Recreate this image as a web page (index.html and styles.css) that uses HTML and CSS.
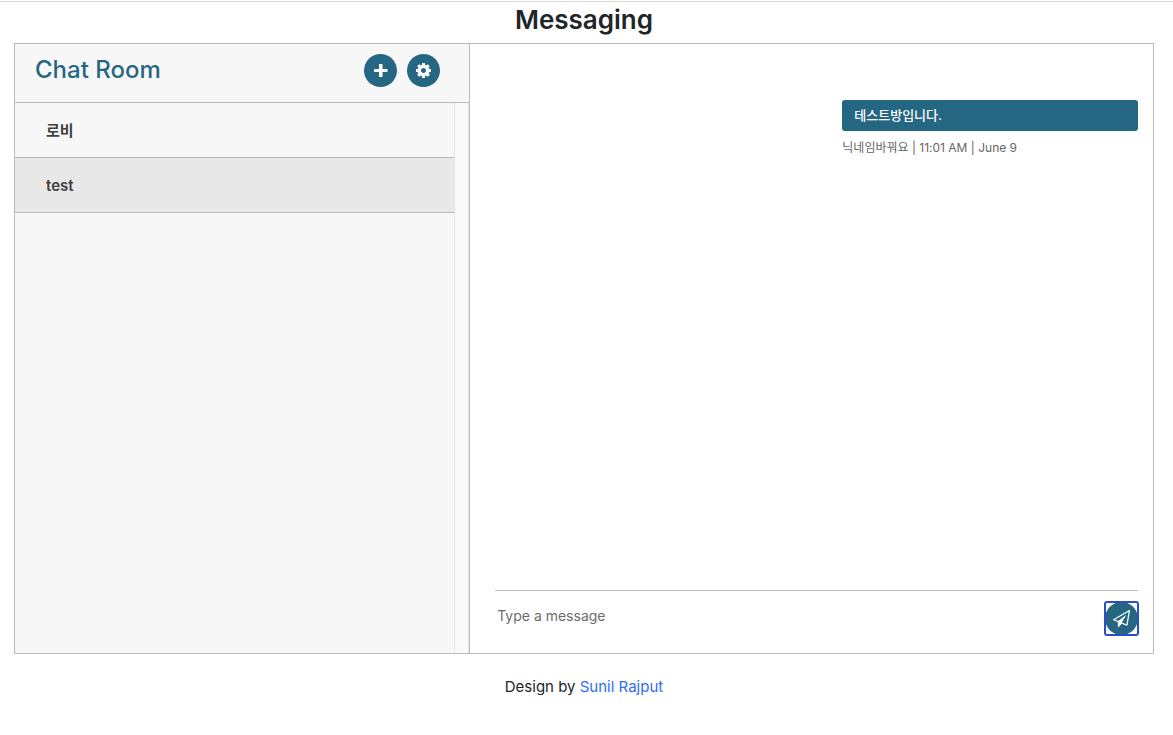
FILE: index.html
```html
<!DOCTYPE html>
<html lang="ko">
  <head>
    <meta charset="utf-8" />
    <meta name="viewport" content="width=device-width, initial-scale=1" />
    <title>Messaging</title>
    <link rel="stylesheet" href="styles.css">
  </head>
  <body>
    <div class="container">
      <h3 class="page-title">Messaging</h3>
      <div class="messaging">
        <div class="inbox_people">
          <div class="headind_srch">
            <h4 class="recent_heading">Chat Room</h4>
            <div class="room_buttons">
              <button type="button" class="round_btn" aria-label="Add room">
                <svg width="15" height="15" viewBox="0 0 15 15" fill="currentColor">
                  <path d="M6.6 1h2.3q.6 0 .6.6V6h4.400q.6 0 .6.6v1.800q0 .6-.6.6H9.500v4.400q0 .6-.6.6H6.600q-.6 0-.6-.6V9H1.600Q1 9 1 8.400V6.600Q1 6 1.600 6H6V1.600Q6 1 6.600 1z" />
                </svg>
              </button>
              <button type="button" class="round_btn" aria-label="Settings">
                <svg width="15" height="15" viewBox="0 0 1536 1536" fill="currentColor">
                  <path d="M1024 768q0-106-75-181t-181-75-181 75-75 181 75 181 181 75 181-75 75-181zm512-109v222q0 12-8 23t-20 13l-185 28q-19 54-39 91 35 50 107 138 10 12 10 25t-9 23q-27 37-99 108t-94 71q-12 0-26-9l-138-108q-44 23-91 38-16 136-29 186-7 28-36 28H657q-14 0-24.500-8.500T621 1506l-28-184q-49-16-90-37l-141 107q-10 9-25 9-14 0-25-11-126-114-165-168-7-10-7-23 0-12 8-23 15-21 51-66.500t54-70.500q-27-50-41-99L29 913q-13-2-21-12.500T0 877V655q0-12 8-23t19-13l186-28q14-46 39-92-40-57-107-138-10-12-10-24 0-10 9-23 26-36 98.500-107.500T337 135q13 0 26 10l138 107q44-23 91-38 16-136 29-186 7-28 36-28h222q14 0 24.500 8.500T915 30l28 184q49 16 90 37l142-107q9-9 24-9 13 0 25 10 129 119 165 170 7 8 7 22 0 12-8 23-15 21-51 66.500t-54 70.500q26 50 41 98l183 28q13 2 21 12.500t8 23.500z" />
                </svg>
              </button>
            </div>
          </div>
          <div class="inbox_body">
            <div class="inbox_chat">
              <a href="#" class="chat_list">로비</a>
              <a href="#" class="chat_list active_chat">test</a>
            </div>
            <div class="scroll_track"></div>
          </div>
        </div>
        <div class="mesgs">
          <div class="msg_history">
            <div class="outgoing_msg">
              <div class="sent_msg">
                <p>테스트방입니다.</p>
                <span class="time_date">닉네임바꿔요 | 11:01 AM | June 9</span>
              </div>
            </div>
          </div>
          <form class="type_msg">
            <input type="text" class="write_msg" placeholder="Type a message" aria-label="Message" />
            <button type="button" class="round_btn msg_send_btn" aria-label="Send">
              <svg width="17" height="17" viewBox="0 0 1792 1792" fill="currentColor">
                <path d="M1764 11q33 24 27 64l-256 1536q-5 29-32 45-14 8-31 8-11 0-24-5l-527-215-298 327q-18 21-47 21-14 0-23-4-19-7-30-23.500t-11-36.500v-452l-472-193q-37-14-40-55-3-39 32-59l1664-960q35-21 68 2zm-342 1499l221-1323-1434 827 336 137 863-639-478 797z" />
              </svg>
            </button>
          </form>
        </div>
      </div>
      <p class="credit">Design by <a href="#">Sunil Rajput</a></p>
    </div>
  </body>
</html>
```
FILE: styles.css
```css
* {
  box-sizing: border-box;
}

html {
  background: linear-gradient(#d6d6d6, #d6d6d6) 0 1px / 100% 1px no-repeat #fff;
}

body {
  margin: 1px 0 0;
  padding-right: 5px;
  font-family: Inter, "Noto Sans CJK KR", sans-serif;
  font-size: 15px;
  line-height: 24px;
  color: #212529;
}

h3,
h4,
p {
  margin: 0;
}

.container {
  max-width: 1140px;
  margin: 0 auto;
}

.page-title {
  padding: 2px 0 6px;
  font-size: 26px;
  font-weight: 600;
  line-height: 34px;
  text-align: center;
}

.messaging {
  display: flex;
  border: 1px solid #bbb;
}

.inbox_people {
  width: 40%;
  background: #f7f7f7;
  border-right: 1px solid #bbb;
}

.headind_srch {
  display: flex;
  justify-content: space-between;
  padding: 10px 29px 15px 20px;
  border-bottom: 1px solid #bbb;
}

.recent_heading {
  color: #256783;
  font-size: 24px;
  font-weight: 500;
  line-height: 32px;
}

.room_buttons {
  display: flex;
  gap: 10px;
}

.round_btn {
  display: flex;
  align-items: center;
  justify-content: center;
  width: 33px;
  height: 33px;
  padding: 0;
  border: none;
  border-radius: 50%;
  background: #256783;
  color: #fff;
  cursor: pointer;
}

.inbox_body {
  display: flex;
  height: 550px;
}

.inbox_chat {
  flex: 1;
  overflow-y: auto;
}

.scroll_track {
  width: 15px;
  background: #f9f9f9;
  border: 1px solid #e6e6e6;
  border-width: 0 1px;
}

.chat_list {
  display: block;
  padding: 16px 31px 14px;
  border-bottom: 1px solid #bbb;
  color: #3f3f3f;
  font-size: 15px;
  font-weight: 600;
  text-decoration: none;
}

.active_chat {
  background: #e8e8e8;
}

.mesgs {
  flex: 1;
  padding: 30px 15px 0 25px;
}

.msg_history {
  height: 516px;
  overflow-y: auto;
}

.outgoing_msg {
  display: flex;
  justify-content: flex-end;
  margin: 26px 0;
}

.sent_msg {
  width: 46%;
}

.sent_msg p {
  padding: 5px 10px 5px 12px;
  border-radius: 3px;
  background: #256783;
  color: #fff;
  font-size: 13px;
  font-weight: 500;
  line-height: 21px;
}

.time_date {
  display: block;
  margin-top: 8px;
  color: #666;
  font-size: 12px;
  line-height: 18px;
}

.type_msg {
  display: flex;
  align-items: flex-start;
  padding: 11px 0 18px;
  border-top: 1px solid #bbb;
}

.write_msg {
  flex: 1;
  height: 26px;
  padding: 0 2px;
  border: none;
  outline: none;
  background: none;
  color: #4c4c4c;
  font-family: inherit;
  font-size: 14px;
}

.write_msg::placeholder {
  color: #6c6c6c;
}

.msg_send_btn {
  outline: none;
  position: relative;
}

/* square focus ring around the round button */
.msg_send_btn::after {
  content: "";
  position: absolute;
  inset: -1px;
  border: 2px solid #2a4fc4;
  border-radius: 3px;
}

.credit {
  margin-top: 21px;
  text-align: center;
}

.credit a {
  color: #2f6df6;
  text-decoration: none;
}
```
